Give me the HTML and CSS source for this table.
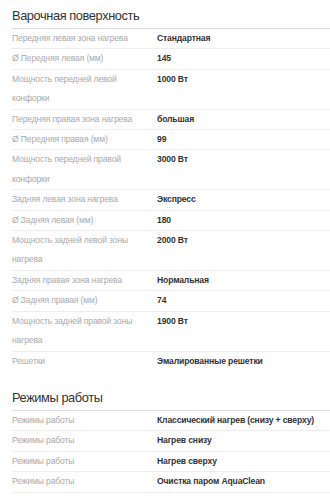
FILE: index.html
```html
<!DOCTYPE html>
<html lang="ru">
<head>
<meta charset="utf-8">
<link rel="stylesheet" href="styles.css">
</head>
<body>
<div class="page">
  <section class="group">
    <h2 class="group-title">Варочная поверхность</h2>
    <div class="rows">
      <div class="row"><div class="label">Передняя левая зона нагрева</div><div class="value">Стандартная</div></div>
      <div class="row"><div class="label">Ø Передняя левая (мм)</div><div class="value">145</div></div>
      <div class="row"><div class="label">Мощность передней левой конфорки</div><div class="value">1000 Вт</div></div>
      <div class="row"><div class="label">Передняя правая зона нагрева</div><div class="value">большая</div></div>
      <div class="row"><div class="label">Ø Передняя правая (мм)</div><div class="value">99</div></div>
      <div class="row"><div class="label">Мощность передней правой конфорки</div><div class="value">3000 Вт</div></div>
      <div class="row"><div class="label">Задняя левая зона нагрева</div><div class="value">Экспресс</div></div>
      <div class="row"><div class="label">Ø Задняя левая (мм)</div><div class="value">180</div></div>
      <div class="row"><div class="label">Мощность задней левой зоны нагрева</div><div class="value">2000 Вт</div></div>
      <div class="row"><div class="label">Задняя правая зона нагрева</div><div class="value">Нормальная</div></div>
      <div class="row"><div class="label">Ø Задняя правая (мм)</div><div class="value">74</div></div>
      <div class="row"><div class="label">Мощность задней правой зоны нагрева</div><div class="value">1900 Вт</div></div>
      <div class="row"><div class="label">Решетки</div><div class="value">Эмалированные решетки</div></div>
    </div>
  </section>
  <section class="group">
    <h2 class="group-title">Режимы работы</h2>
    <div class="rows rows-open">
      <div class="row"><div class="label">Режимы работы</div><div class="value">Классический нагрев (снизу + сверху)</div></div>
      <div class="row"><div class="label">Режимы работы</div><div class="value">Нагрев снизу</div></div>
      <div class="row"><div class="label">Режимы работы</div><div class="value">Нагрев сверху</div></div>
      <div class="row"><div class="label">Режимы работы</div><div class="value">Очистка паром AquaClean</div></div>
    </div>
  </section>
</div>
</body>
</html>
```

FILE: styles.css
```css
html, body {
  margin: 0;
  padding: 0;
  background: #fff;
}
body {
  font-family: "Liberation Sans", Arial, Helvetica, sans-serif;
  color: #333;
}
.page {
  padding-left: 12px;
}
.group + .group {
  margin-top: 11px;
}
.group-title {
  margin: 0;
  padding: 6px 0 2px;
  font-size: 12.8px;
  letter-spacing: -0.4px;
  line-height: 20px;
  font-weight: normal;
  color: #333;
  border-bottom: 1px solid #ddd;
}
.rows-open {
  border-bottom: 1px solid #eee;
}
.row {
  display: flex;
  font-size: 8.6px;
  letter-spacing: -0.15px;
  line-height: 19.4px;
}
.row + .row {
  border-top: 1px solid #eee;
}
.label {
  flex: none;
  width: 133px;
  padding-right: 12px;
  color: #aaa;
}
.value {
  flex: 1;
  font-weight: bold;
  color: #333;
}
```
